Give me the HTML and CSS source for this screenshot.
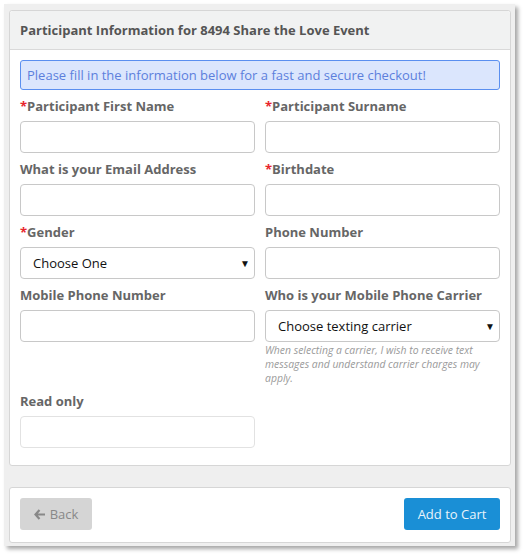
FILE: index.html
```html
<!DOCTYPE html>
<html>
<head>
  <meta charset="utf-8">
  <title>Participant Information</title>
  <link rel="stylesheet" href="styles.css">
</head>
<body>
  <div class="wrap">
    <section class="card">
      <div class="card-head">Participant Information for 8494 Share the Love Event</div>
      <div class="card-body">
        <div class="alert">Please fill in the information below for a fast and secure checkout!</div>
        <div class="grid">
          <div class="field">
            <label><span class="req">*</span>Participant First Name</label>
            <input type="text">
          </div>
          <div class="field">
            <label><span class="req">*</span>Participant Surname</label>
            <input type="text">
          </div>
          <div class="field">
            <label>What is your Email Address</label>
            <input type="text">
          </div>
          <div class="field">
            <label><span class="req">*</span>Birthdate</label>
            <input type="text">
          </div>
          <div class="field">
            <label><span class="req">*</span>Gender</label>
            <div class="select">Choose One<span class="caret">&#9660;</span></div>
          </div>
          <div class="field">
            <label>Phone Number</label>
            <input type="text">
          </div>
          <div class="field">
            <label>Mobile Phone Number</label>
            <input type="text">
          </div>
          <div class="field">
            <label>Who is your Mobile Phone Carrier</label>
            <div class="select">Choose texting carrier<span class="caret">&#9660;</span></div>
            <p class="help">When selecting a carrier, I wish to receive text messages and understand carrier charges may apply.</p>
          </div>
          <div class="field">
            <label>Read only</label>
            <input type="text" class="readonly" readonly>
          </div>
        </div>
      </div>
    </section>

    <section class="card foot">
      <button class="btn back">
        <svg width="12" height="11" viewBox="0 0 12 11"><path d="M5.5 1 L1.5 5.5 L5.5 10 M1.5 5.5 H11" fill="none" stroke="#888" stroke-width="2.2"/></svg>
        Back
      </button>
      <button class="btn primary">Add to Cart</button>
    </section>
  </div>
</body>
</html>
```

FILE: styles.css
```css
* {
  box-sizing: border-box;
}

body {
  margin: 0;
  padding: 4px 10px 8px 4px;
  background: #ffffff;
  font-family: "Open Sans", "Liberation Sans", sans-serif;
}

.wrap {
  width: 511px;
  background: #efefef;
  padding: 6px 4px 3px 5px;
  display: flex;
  flex-direction: column;
  gap: 21px;
  box-shadow: 3px 3px 4px rgba(0,0,0,0.35);
}

.card {
  background: white;
  border: 1px solid #d6d6d6;
  border-radius: 3px;
}

.card-head {
  background: #f1f2f2;
  border-bottom: 1px solid #d9d9d9;
  height: 39px;
  padding: 0 10px;
  display: flex;
  align-items: center;
  font-size: 13px;
  font-weight: bold;
  color: #555;
  border-radius: 3px 3px 0 0;
}

.card-body {
  padding: 10px 10px 10px 10px;
}

.alert {
  background: #dbe6fd;
  border: 1px solid #5a8ff0;
  border-radius: 3px;
  height: 30px;
  padding: 0 6px;
  display: flex;
  align-items: center;
  color: #5c7fdc;
  font-size: 13px;
  margin-bottom: 7px;
}

.grid {
  display: grid;
  grid-template-columns: 1fr 1fr;
  column-gap: 10px;
}

.field {
  display: flex;
  flex-direction: column;
  padding-bottom: 7px;
}

label {
  font-size: 13px;
  font-weight: bold;
  color: #666;
  height: 20px;
  line-height: 18px;
  margin-bottom: 4px;
}

.req {
  color: #e8252b;
}

input {
  height: 32px;
  border: 1px solid #c8c8c8;
  border-radius: 4px;
  font: inherit;
  margin: 0;
}

input.readonly {
  border-color: #e2e2e2;
}

.select {
  height: 32px;
  border: 1px solid #c8c8c8;
  border-radius: 4px;
  padding: 0 4px 0 12px;
  display: flex;
  align-items: center;
  justify-content: space-between;
  font-size: 13px;
  color: #111;
}

.caret {
  font-size: 10px;
  color: #111;
}

.help {
  margin: 1px 0 0 0;
  font-size: 10.4px;
  font-style: italic;
  line-height: 14px;
  color: #9a9a9a;
}

.foot {
  height: 56px;
  padding: 10px 10px 0 10px;
  display: flex;
  align-items: flex-start;
  justify-content: space-between;
}

.btn {
  border: none;
  border-radius: 3px;
  height: 32px;
  font-family: inherit;
  font-size: 13px;
  padding: 0 12px;
  white-space: nowrap;
  display: flex;
  align-items: center;
  justify-content: center;
  gap: 4px;
}

.back {
  background: #d5d5d5;
  color: #888;
  width: 72px;
}

.primary {
  background: #1a8fd6;
  color: #e9f4fb;
  width: 96px;
}
```
